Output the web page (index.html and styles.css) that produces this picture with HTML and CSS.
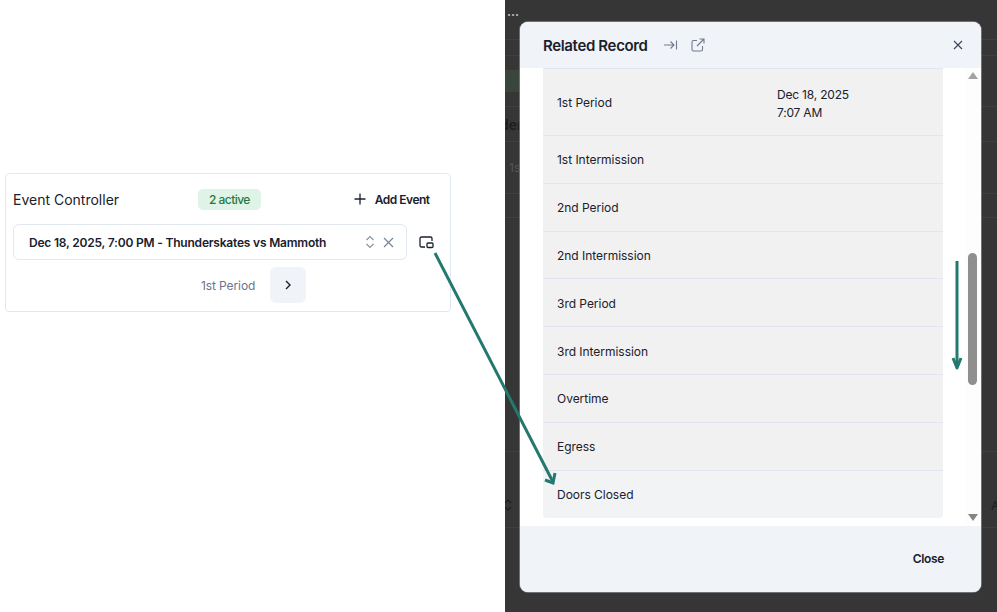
FILE: index.html
```html
<!DOCTYPE html>
<html>
<head>
    <meta charset="utf-8">
    <title>Event Controller</title>
    <link rel="stylesheet" href="styles.css">
</head>
<body>
    <div class="left">
        <div class="card">
            <div class="card-head">
                <span class="card-title">Event Controller</span>
                <span class="badge">2 active</span>
                <span class="add-event">
                    <svg width="14" height="14" viewBox="0 0 14 14"><path d="M7 1.500v11M1.500 7h11" stroke="#1a202c" stroke-width="1.300" fill="none"/></svg>
                    Add Event
                </span>
            </div>
            <div class="select-row">
                <div class="select">
                    <span class="select-text">Dec 18, 2025, 7:00 PM - Thunderskates vs Mammoth</span>
                    <svg class="chevrons" width="10" height="14" viewBox="0 0 10 14"><path d="M1.500 5 5 1.500 8.500 5M1.500 9 5 12.500 8.500 9" stroke="#8a93a3" stroke-width="1.200" fill="none"/></svg>
                    <svg class="clear" width="11" height="11" viewBox="0 0 11 11"><path d="M1 1l9 9M10 1l-9 9" stroke="#7b8494" stroke-width="1.200" fill="none"/></svg>
                </div>
                <svg class="pip" width="15" height="13" viewBox="0 0 15 13"><path d="M6 11H2.500A1.500 1.500 0 0 1 1 9.500v-7A1.500 1.500 0 0 1 2.500 1h9A1.500 1.500 0 0 1 13 2.500V5" stroke="#1a202c" stroke-width="1.300" fill="none"/><rect x="8" y="7" width="6" height="4.500" rx="1" stroke="#1a202c" stroke-width="1.300" fill="none"/></svg>
            </div>
            <div class="period-row">
                <span class="period-label">1st Period</span>
                <button class="next-btn">
                    <svg width="8" height="10" viewBox="0 0 8 10"><path d="M2 1l4 4-4 4" stroke="#1a202c" stroke-width="1.400" fill="none"/></svg>
                </button>
            </div>
        </div>
    </div>

    <div class="right">
        <div class="behind">
            <div class="dots">...</div>
            <div class="behind-line l1"></div>
            <div class="behind-line l2"></div>
            <div class="behind-chip"></div>
            <div class="behind-line l5"></div>
            <div class="behind-text t1">der</div>
            <div class="behind-line l6"></div>
            <div class="behind-text t2">1s</div>
            <div class="behind-line l7"></div>
            <div class="behind-line l8"></div>
            <div class="behind-line l3"></div>
            <svg class="behind-sort" width="8" height="14" viewBox="0 0 8 14"><path d="M0 5 3 2 6 5M0 9 3 12 6 9" stroke="#1d1d1d" stroke-width="1.200" fill="none"/></svg>
            <div class="behind-text t3">A</div>
            <div class="behind-line l4"></div>
        </div>

        <div class="modal">
            <div class="modal-head">
                <span class="modal-title">Related Record</span>
                <svg class="head-icon" width="15" height="12" viewBox="0 0 15 12"><path d="M1 6h10M7.500 2.500 11 6l-3.500 3.500M13.500 1.500v9" stroke="#717b8c" stroke-width="1.100" fill="none"/></svg>
                <svg class="head-icon" width="14" height="14" viewBox="0 0 14 14"><path d="M6 2.500H2.500A1.500 1.500 0 0 0 1 4v7.500A1.500 1.500 0 0 0 2.500 13H10a1.500 1.500 0 0 0 1.500-1.500V8M6 8l7-7M8.500 1H13v4.500" stroke="#717b8c" stroke-width="1.100" fill="none"/></svg>
                <svg class="modal-x" width="10" height="10" viewBox="0 0 10 10"><path d="M1 1l8 8M9 1L1 9" stroke="#3a4454" stroke-width="1.100" fill="none"/></svg>
            </div>
            <div class="modal-body">
                <div class="rows">
                    <div class="row row-tall">
                        <span>1st Period</span>
                        <span class="row-date">Dec 18, 2025<br>7:07 AM</span>
                    </div>
                    <div class="row"><span>1st Intermission</span></div>
                    <div class="row"><span>2nd Period</span></div>
                    <div class="row"><span>2nd Intermission</span></div>
                    <div class="row"><span>3rd Period</span></div>
                    <div class="row"><span>3rd Intermission</span></div>
                    <div class="row"><span>Overtime</span></div>
                    <div class="row"><span>Egress</span></div>
                    <div class="row row-last"><span>Doors Closed</span></div>
                </div>
                <div class="scrollbar">
                    <span class="tri-up"></span>
                    <span class="thumb"></span>
                    <span class="tri-down"></span>
                </div>
            </div>
            <div class="modal-foot">
                <span class="close-btn">Close</span>
            </div>
        </div>
    </div>

    <!-- annotation arrows -->
    <svg class="arrows" width="997" height="612" viewBox="0 0 997 612">
        <g stroke="#24796f" stroke-width="3" fill="none">
            <path d="M435 253 553 482"/>
            <path d="M545 480 553 483 555 473"/>
            <path d="M957 261V367"/>
            <path d="M953 358 957 368 961 358" stroke-linejoin="round"/>
        </g>
    </svg>
</body>
</html>
```

FILE: styles.css
```css
* {
    box-sizing: border-box;
}

html, body {
    height: 100%;
}

body {
    margin: 0;
    display: flex;
    height: 612px;
    overflow: hidden;
    background-color: #fff;
    color: #1a202c;
    font-family: Inter, "Noto Sans", sans-serif;
    font-size: 12px;
}

.left {
    width: 505px;
    padding: 173px 54px 0 5px;
}

.card {
    height: 139px;
    padding: 11px 7px;
    border: 1px solid #e2e8f0;
    border-radius: 4px;
}

.card-head {
    display: flex;
    align-items: center;
    height: 28px;
}

.card-title {
    width: 185px;
    font-size: 14px;
}

.badge {
    padding: 3px 11px;
    border-radius: 5px;
    background-color: #dff3e6;
    color: #1f7a45;
    font-size: 12px;
    font-weight: 500;
    letter-spacing: -0.55px;
}

.add-event {
    display: flex;
    align-items: center;
    gap: 8px;
    margin-left: 92px;
    font-weight: 600;
    letter-spacing: -0.5px;
    white-space: nowrap;
}

.select-row {
    display: flex;
    align-items: center;
    margin-top: 11px;
}

.select {
    display: flex;
    align-items: center;
    width: 394px;
    height: 36px;
    padding: 0 12px 0 15px;
    border: 1px solid #e2e8f0;
    border-radius: 6px;
}

.select-text {
    flex: 1;
    font-weight: 600;
    letter-spacing: -0.2px;
    white-space: nowrap;
}

.clear {
    margin-left: 8px;
}

.pip {
    margin-left: 12px;
}

.period-row {
    display: flex;
    align-items: center;
    margin-top: 7px;
    padding-left: 188px;
}

.period-label {
    color: #6b7488;
    letter-spacing: -0.1px;
}

.next-btn {
    display: flex;
    align-items: center;
    justify-content: center;
    width: 36px;
    height: 36px;
    margin-left: 15px;
    padding: 0;
    border: 0;
    border-radius: 6px;
    background-color: #f0f3f8;
}

.right {
    position: relative;
    flex: 1;
    overflow: hidden;
    background-color: #363636;
}

.behind {
    color: #1d1d1d;
}

.dots {
    position: absolute;
    left: 2px;
    top: 4px;
    font-weight: 700;
    color: #bbb;
}

.behind-line {
    position: absolute;
    left: 0;
    right: 0;
    height: 1px;
    background-color: #404040;
}

.l1 { top: 39px; }
.l2 { top: 55px; }
.l5 { top: 106px; }
.l6 { top: 141px; }
.l7 { top: 193px; }
.l8 { top: 217px; }
.l3 { top: 451px; }
.l4 { top: 527px; }

.behind-chip {
    position: absolute;
    left: 0;
    top: 70px;
    width: 14px;
    height: 22px;
    background-color: #3a463c;
}

.behind-text {
    position: absolute;
    font-weight: 600;
}

.t1 { left: -5px; top: 116px; font-size: 14px; }
.t2 { left: 4px; top: 160px; color: #555; font-weight: 400; }
.t3 { left: 486px; top: 498px; font-weight: 400; }

.behind-sort {
    position: absolute;
    left: 0;
    top: 498px;
}

.modal {
    position: absolute;
    left: 15px;
    top: 22px;
    display: flex;
    flex-direction: column;
    width: 461px;
    height: 570px;
    overflow: hidden;
    border-radius: 8px;
    background-color: #fff;
    box-shadow: 0 0 0 1px #6d7278;
}

.modal-head {
    display: flex;
    align-items: center;
    flex: none;
    height: 46px;
    padding: 0 18px 0 23px;
    background-color: #f0f3f8;
}

.modal-title {
    margin-right: 15px;
    font-size: 15px;
    font-weight: 600;
    letter-spacing: -0.35px;
}

.head-icon {
    margin-right: 13px;
}

.modal-x {
    margin-left: auto;
}

.modal-body {
    display: flex;
    flex: 1;
    min-height: 0;
    padding-left: 23px;
}

.rows {
    width: 400px;
    height: 449px;
    border-radius: 0 0 4px 4px;
    background-color: #f1f1f1;
    border-top: 1px solid #e2e5ef;
}

.row {
    display: flex;
    align-items: center;
    height: 47.800px;
    padding: 1px 0 0 14px;
    border-bottom: 1px solid #e2e5ef;
    font-size: 12px;
    letter-spacing: -0.03px;
}

.row > span:first-child {
    width: 220px;
}

.row-tall {
    height: 67px;
}

.row-date {
    margin-top: 2px;
    line-height: 18px;
    letter-spacing: -0.2px;
}

.row-last {
    border-bottom: 0;
    background-color: #f2f3f5;
    border-radius: 0 0 4px 4px;
}

.scrollbar {
    display: flex;
    flex-direction: column;
    align-items: center;
    width: 15px;
    height: 456px;
    margin-left: 22px;
    background-color: #fdfdfd;
}

.tri-up,
.tri-down {
    width: 0;
    height: 0;
    border-left: 5px solid transparent;
    border-right: 5px solid transparent;
}

.tri-up {
    margin-top: 4px;
    border-bottom: 7px solid #a3a3a3;
}

.tri-down {
    margin-top: 129px;
    border-top: 7px solid #858585;
}

.thumb {
    width: 9px;
    height: 132px;
    margin-top: 174px;
    border-radius: 5px;
    background-color: #8f8f8f;
}

.modal-foot {
    display: flex;
    align-items: center;
    justify-content: flex-end;
    flex: none;
    height: 66px;
    padding: 0 37px 2px 0;
    background-color: #f0f3f8;
}

.close-btn {
    font-weight: 600;
    letter-spacing: -0.35px;
}

.arrows {
    position: absolute;
    left: 0;
    top: 0;
    pointer-events: none;
}
```
